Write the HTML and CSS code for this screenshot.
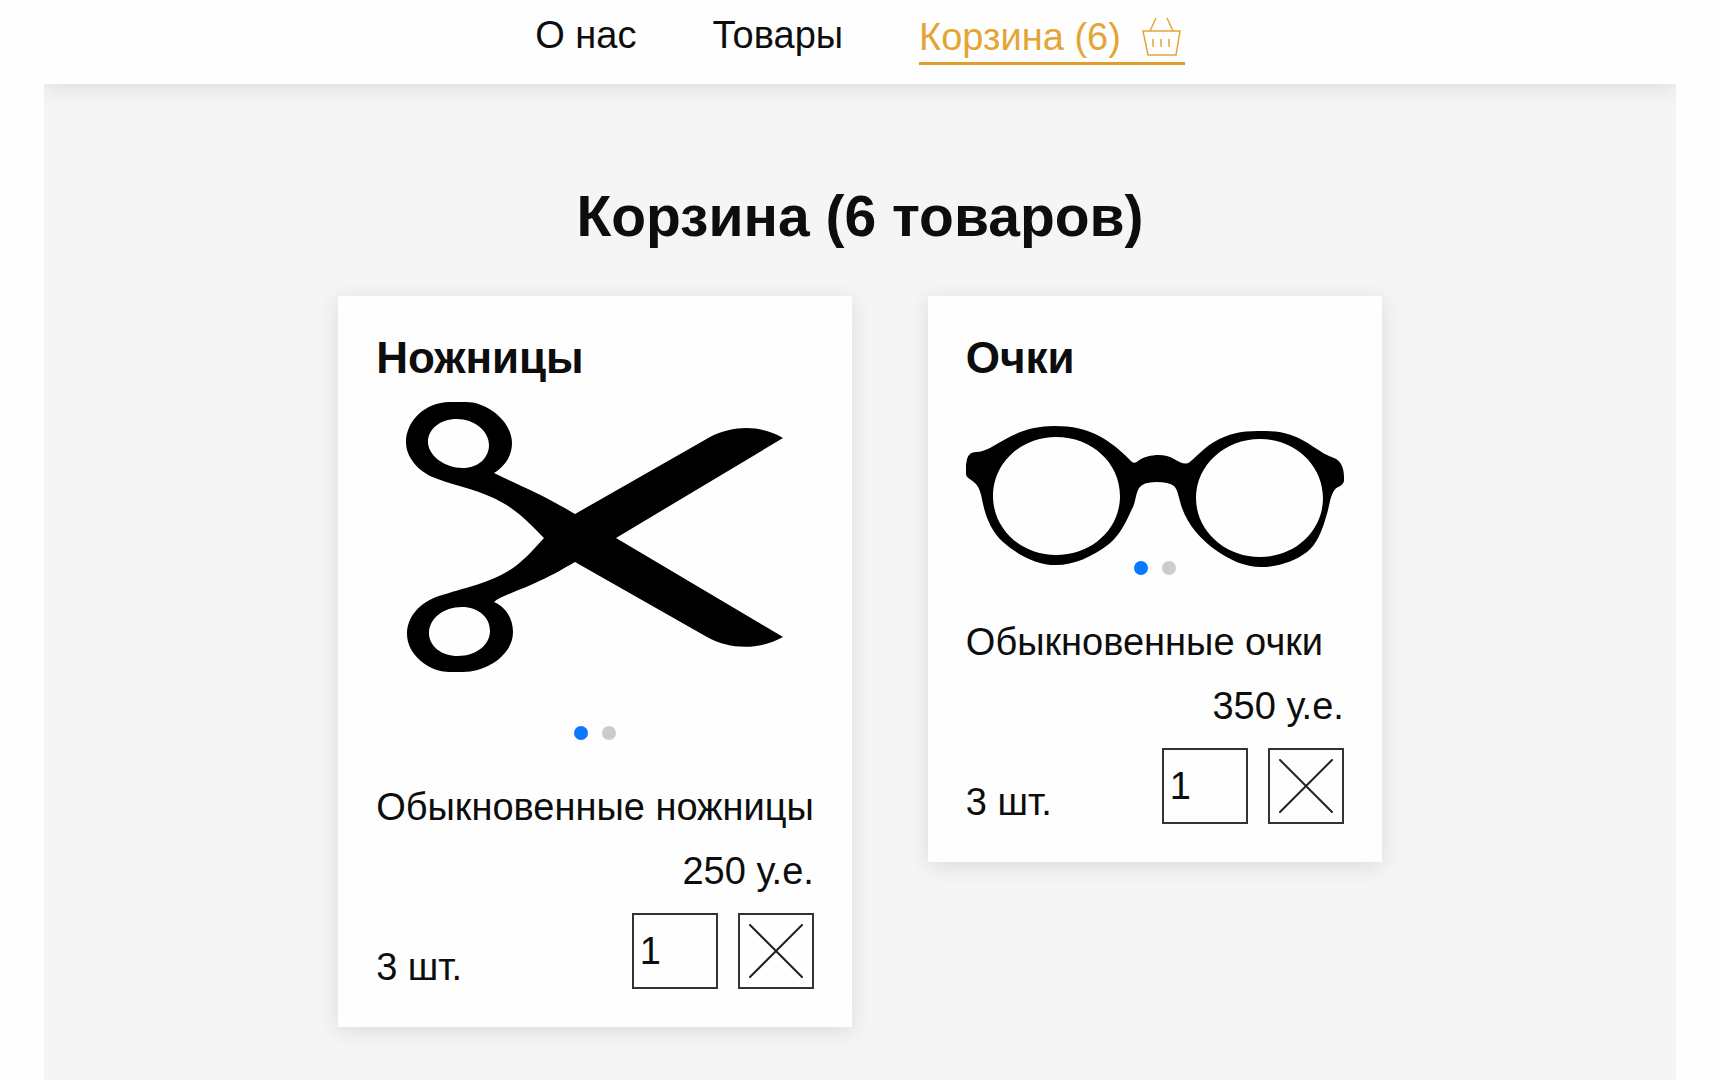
FILE: index.html
```html
<!DOCTYPE html>
<html lang="ru">
<head>
<meta charset="utf-8">
<title>Корзина</title>
<meta name="viewport" content="width=device-width, initial-scale=1">
<link rel="stylesheet" href="styles.css">
</head>
<body>
<div class="page">
  <header class="header">
    <nav class="nav">
      <a class="nav-link" href="#about">О нас</a>
      <a class="nav-link" href="#goods">Товары</a>
      <a class="nav-link nav-link-active" href="#cart">Корзина (6)
        <svg class="basket" viewBox="0 0 44 40" fill="none" stroke="currentColor" stroke-width="1.5" aria-hidden="true">
          <path d="M2 14H39L35 38H7Z"/>
          <path d="M9 14L15 1M32 14L26 1"/>
          <path d="M12 22V30M20 22V30M28 22V30"/>
        </svg>
      </a>
    </nav>
  </header>
  <main class="main">
    <h1 class="heading">Корзина (6 товаров)</h1>
    <div class="cards">
      <article class="card">
        <h2 class="card-title">Ножницы</h2>
        <div class="slider">
          <svg class="picture" viewBox="0 0 378 355" role="img" aria-label="Ножницы">
            <path fill-rule="evenodd" d="M88 71C99 64 106 54 106 41C106 20 82 0 60 0H44C18 0 0 20 0 40C0 56 13 70 29 76C53 85 75 88 97 101C113 110 124 122 138 136C128 147 122 154 111 163C88 181 52 187 30 195C12 202 1 216 1 232C1 252 22 270 44 270H57C82 270 107 252 107 230C107 217 100 205 88 200C94 195 106 191 127 182C143 175 155 168 169 160L301 235C324 248 354 248 377 235L210 136L377 36C355 23 328 23 304 35L169 112C136 92 110 82 88 71ZM51 17C68 17 83 29 83 43C83 56 72 66 57 66C38 66 22 53 22 40C22 27 34 17 51 17ZM56 205C72 205 84 215 84 229C84 243 70 254 52 254C35 254 23 244 23 231C23 217 37 205 56 205Z"/>
          </svg>
          <div class="dots"><span class="dot dot-active"></span><span class="dot"></span></div>
        </div>
        <p class="text">Обыкновенные ножницы</p>
        <p class="text price">250 у.е.</p>
        <div class="controls">
          <span class="count">3 шт.</span>
          <input class="amount" type="text" inputmode="numeric" value="1" aria-label="Количество ножниц">
          <button class="remove" type="button" aria-label="Удалить ножницы">
            <svg class="cross" viewBox="0 0 54 54" fill="none" stroke="currentColor" stroke-width="2" stroke-linecap="round" aria-hidden="true"><path d="M1 1L53 53M53 1L1 53"/></svg>
          </button>
        </div>
      </article>
      <article class="card">
        <h2 class="card-title">Очки</h2>
        <div class="slider">
          <svg class="picture" viewBox="0 0 378 190" role="img" aria-label="Очки">
            <path fill-rule="evenodd" d="M1 57Q3 50 10 50C20 50 28 43 38 38C53 29 69 24 88 24C106 24 121 27 135 35C149 43 158 52 166 60Q169 62 172 59C182 52 199 51 208 57C215 61 220 64 225 59C232 53 239 45 248 40C261 32 275 29 292 29C305 29 315 29 325 33C343 39 353 51 368 56C374 58 378 65 378 75V79Q377 83 372 85C364 89 364 104 360 115C356 129 351 142 341 150C328 160 310 165 295 165C279 165 264 158 251 149C235 138 222 123 216 106C213 97 212 88 208 84Q203 80 190 80Q177 80 173 86C169 93 170 100 166 107C160 120 154 133 143 142C126 155 108 163 90 163C70 163 52 153 37 140C25 129 20 115 17 102C15 92 14 86 9 81C5 77 0 76 0 72V63ZM90 35C55 35 27 61 27 94C27 127 55 153 90 153C126 153 154 127 154 94C154 61 126 35 90 35ZM294 37C259 37 230 63 230 96C230 129 259 155 294 155C329 155 357 129 357 96C357 63 329 37 294 37Z"/>
          </svg>
          <div class="dots"><span class="dot dot-active"></span><span class="dot"></span></div>
        </div>
        <p class="text">Обыкновенные очки</p>
        <p class="text price">350 у.е.</p>
        <div class="controls">
          <span class="count">3 шт.</span>
          <input class="amount" type="text" inputmode="numeric" value="1" aria-label="Количество очков">
          <button class="remove" type="button" aria-label="Удалить очки">
            <svg class="cross" viewBox="0 0 54 54" fill="none" stroke="currentColor" stroke-width="2" stroke-linecap="round" aria-hidden="true"><path d="M1 1L53 53M53 1L1 53"/></svg>
          </button>
        </div>
      </article>
    </div>
  </main>
</div>
</body>
</html>
```
FILE: styles.css
```css
* {
  box-sizing: border-box;
}

body {
  margin: 0;
  background: #fefefe;
  color: #0d0d0d;
  font: 38px/44px "Liberation Sans", Arial, sans-serif;
}

.page {
  display: flex;
  flex-direction: column;
  min-height: 100vh;
  margin: 0 44px;
}

.header {
  position: relative;
  height: 84px;
  padding-top: 13px;
  background: #fefefe;
  box-shadow: 0 4px 20px rgba(0, 0, 0, 0.1);
  clip-path: inset(0 0 -40px 0);
}

.nav {
  display: flex;
  justify-content: center;
  align-items: flex-start;
  gap: 76px;
}

.nav-link {
  color: inherit;
  text-decoration: none;
}

.nav-link-active {
  display: flex;
  align-items: center;
  gap: 20px;
  padding: 2px 0 3px;
  border-bottom: 3px solid #dd9f2c;
  color: #e3a535;
}

.basket {
  width: 44px;
  height: 40px;
}

.main {
  flex: 1;
  padding: 98px 20px 54px;
  background: #f5f5f5;
}

.heading {
  margin: 0 0 46px;
  font-size: 57px;
  line-height: 68px;
  text-align: center;
}

.cards {
  display: flex;
  flex-wrap: wrap;
  justify-content: center;
  align-items: flex-start;
  gap: 76px;
}

.card {
  padding: 38px;
  background: #fefefe;
  box-shadow: 0 4px 20px rgba(20, 40, 60, 0.12);
}

.card-title {
  margin: 0 0 20px;
  font-size: 44px;
  line-height: 48px;
}

.slider {
  position: relative;
}

.picture {
  display: block;
  width: 378px;
  margin: 0 auto;
}

.dots {
  position: absolute;
  right: 0;
  bottom: 17px;
  left: 0;
  display: flex;
  justify-content: center;
  gap: 14px;
}

.dot {
  width: 14px;
  height: 14px;
  border-radius: 50%;
  background: #cccccc;
}

.dot-active {
  background: #0a78ff;
}

.text {
  margin: 28px 0 0;
}

.price {
  margin: 20px 0 0;
  text-align: right;
}

.controls {
  display: flex;
  align-items: flex-end;
  gap: 20px;
  margin-top: 20px;
}

.count {
  flex: 1;
}

.amount {
  width: 86px;
  height: 76px;
  padding: 0 6px;
  border: 2px solid #333333;
  border-radius: 0;
  background: transparent;
  color: inherit;
  font: inherit;
}

.remove {
  display: grid;
  place-items: center;
  width: 76px;
  height: 76px;
  padding: 0;
  border: 2px solid #333333;
  background: transparent;
  color: #222222;
}

.cross {
  width: 54px;
  height: 54px;
}
```
